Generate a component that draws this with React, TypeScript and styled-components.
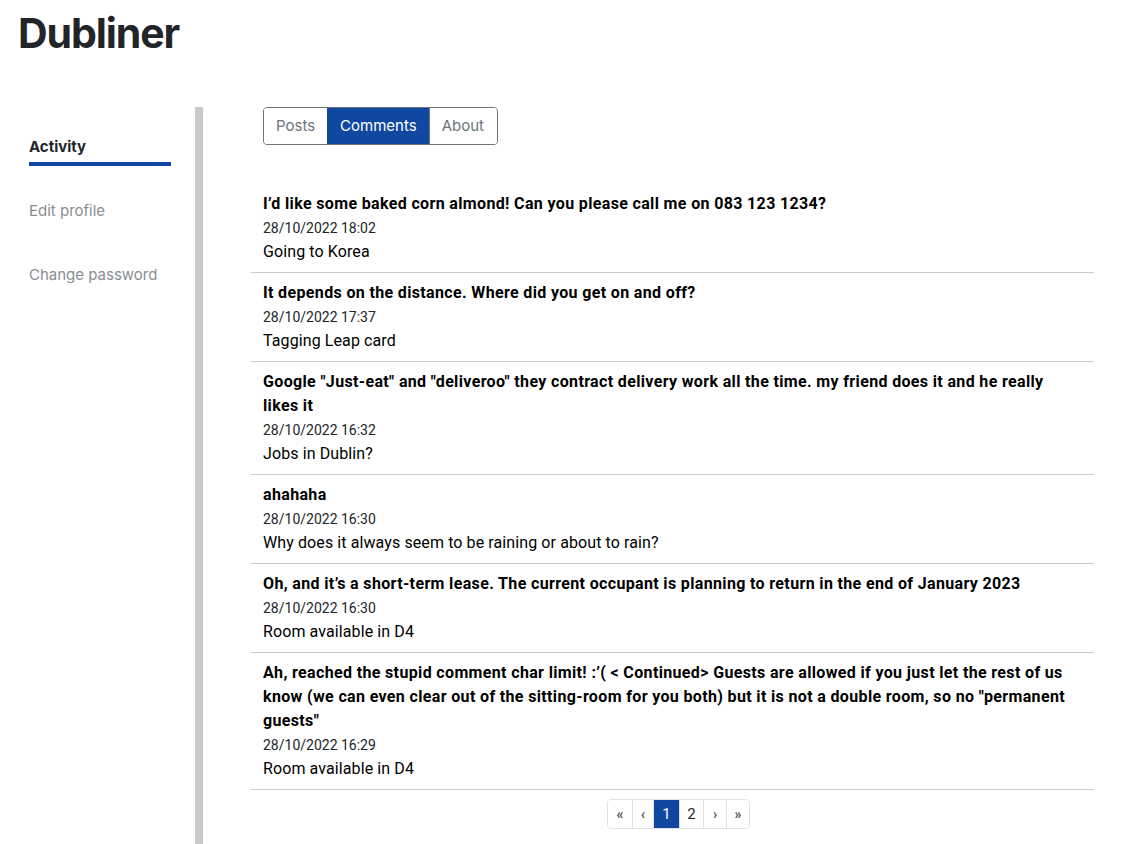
import React from "react";
import styled, { createGlobalStyle } from "styled-components";

const Global = createGlobalStyle`
  html, body { margin: 0; padding: 0; background: #fff; }
  body { font-family: Inter, "Noto Sans", sans-serif; color: #212529; }
  * { box-sizing: border-box; }
`;

const BLUE = "#0f47a1";

const Page = styled.div`
  width: 1128px;
  min-height: 844px;
  display: flex;
  flex-direction: column;
`;

const Title = styled.h1`
  margin: 0;
  padding: 10px 0 0 18px;
  font-family: Inter, sans-serif;
  font-size: 41px;
  font-weight: 700;
  line-height: 46px;
  letter-spacing: -1.1px;
  color: #212529;
`;

const Body = styled.div`
  margin-top: 51px;
  display: grid;
  grid-template-columns: 195px 8px 1fr;
  flex: 1;
`;

const Side = styled.nav`
  padding: 28px 0 0 29px;
  display: flex;
  flex-direction: column;
  gap: 32px;
`;

const SideLink = styled.a<{ $active?: boolean }>`
  width: 142px;
  display: block;
  font-family: Inter, sans-serif;
  font-size: 15px;
  line-height: 24px;
  padding-bottom: 3px;
  border-bottom: 4px solid ${(p) => (p.$active ? BLUE : "transparent")};
  margin-bottom: 1px;
  color: ${(p) => (p.$active ? "#212529" : "#8a8d91")};
  font-weight: ${(p) => (p.$active ? 700 : 400)};
  text-decoration: none;
`;

const Bar = styled.div`
  background: #c8c9cb;
`;

const Content = styled.main`
  padding: 0 34px 0 48px;
  display: flex;
  flex-direction: column;
`;

const Tabs = styled.div`
  margin-left: 12px;
  display: inline-flex;
  align-self: flex-start;
  border: 1px solid #6c757d;
  border-radius: 4px;
  overflow: hidden;
`;

const Tab = styled.button<{ $active?: boolean }>`
  font-family: Inter, sans-serif;
  font-size: 15px;
  line-height: 24px;
  padding: 6px 12px;
  border: none;
  border-left: 1px solid #6c757d;
  &:first-child { border-left: none; }
  &:last-child { padding-right: 13px; }
  background: ${(p) => (p.$active ? BLUE : "#fff")};
  color: ${(p) => (p.$active ? "#fff" : "#6c757d")};
  border-color: ${(p) => (p.$active ? BLUE : "#6c757d")};
`;

const List = styled.ul`
  list-style: none;
  margin: 39px 0 0;
  padding: 0;
`;

const Item = styled.li`
  padding: 8px 12px;
  border-bottom: 1px solid #ccc;
  font-family: Roboto, sans-serif;
  color: #000;
`;

const ItemTitle = styled.div`
  font-size: 16px;
  line-height: 24px;
  font-weight: 700;
  letter-spacing: 0.35px;
`;

const ItemDate = styled.div`
  font-size: 14px;
  line-height: 24px;
  color: #212529;
`;

const ItemPost = styled.div`
  font-size: 16px;
  line-height: 24px;
  letter-spacing: 0.1px;
`;

const Pager = styled.div`
  margin-top: 9px;
  padding-left: 12px;
  display: flex;
  justify-content: center;
`;

const PagerGroup = styled.div`
  display: flex;
  border: 1px solid #dee2e6;
  border-radius: 4px;
  overflow: hidden;
  height: 30px;
`;

const PageItem = styled.span<{ $active?: boolean; $w: number }>`
  width: ${(p) => p.$w}px;
  display: flex;
  align-items: center;
  justify-content: center;
  font-family: Roboto, sans-serif;
  font-size: 15px;
  border-left: 1px solid #dee2e6;
  &:first-child { border-left: none; }
  background: ${(p) => (p.$active ? BLUE : "#fff")};
  color: ${(p) => (p.$active ? "#fff" : "#212529")};
`;

const Arrow = styled.span`
  color: #555;
  font-size: 14px;
  font-weight: 700;
`;

const comments = [
  {
    t: "I’d like some baked corn almond! Can you please call me on 083 123 1234?",
    d: "28/10/2022 18:02",
    p: "Going to Korea",
  },
  {
    t: "It depends on the distance. Where did you get on and off?",
    d: "28/10/2022 17:37",
    p: "Tagging Leap card",
  },
  {
    t: "Google ″Just-eat″ and ″deliveroo″ they contract delivery work all the time. my friend does it and he really likes it",
    d: "28/10/2022 16:32",
    p: "Jobs in Dublin?",
  },
  { t: "ahahaha", d: "28/10/2022 16:30", p: "Why does it always seem to be raining or about to rain?" },
  {
    t: "Oh, and it’s a short-term lease. The current occupant is planning to return in the end of January 2023",
    d: "28/10/2022 16:30",
    p: "Room available in D4",
  },
  {
    t: "Ah, reached the stupid comment char limit! :’( < Continued> Guests are allowed if you just let the rest of us know (we can even clear out of the sitting-room for you both) but it is not a double room, so no ″permanent guests″",
    d: "28/10/2022 16:29",
    p: "Room available in D4",
  },
];

export default function App() {
  return (
    <Page>
      <Global />
      <Title>Dubliner</Title>
      <Body>
        <Side>
          <SideLink $active>Activity</SideLink>
          <SideLink>Edit profile</SideLink>
          <SideLink>Change password</SideLink>
        </Side>
        <Bar />
        <Content>
          <Tabs>
            <Tab>Posts</Tab>
            <Tab $active>Comments</Tab>
            <Tab>About</Tab>
          </Tabs>
          <List>
            {comments.map((c, i) => (
              <Item key={i}>
                <ItemTitle>{c.t}</ItemTitle>
                <ItemDate>{c.d}</ItemDate>
                <ItemPost>{c.p}</ItemPost>
              </Item>
            ))}
          </List>
          <Pager>
            <PagerGroup>
              <PageItem $w={24}><Arrow>«</Arrow></PageItem>
              <PageItem $w={21}><Arrow>‹</Arrow></PageItem>
              <PageItem $w={26} $active>1</PageItem>
              <PageItem $w={24}>2</PageItem>
              <PageItem $w={23}><Arrow>›</Arrow></PageItem>
              <PageItem $w={23}><Arrow>»</Arrow></PageItem>
            </PagerGroup>
          </Pager>
        </Content>
      </Body>
    </Page>
  );
}
